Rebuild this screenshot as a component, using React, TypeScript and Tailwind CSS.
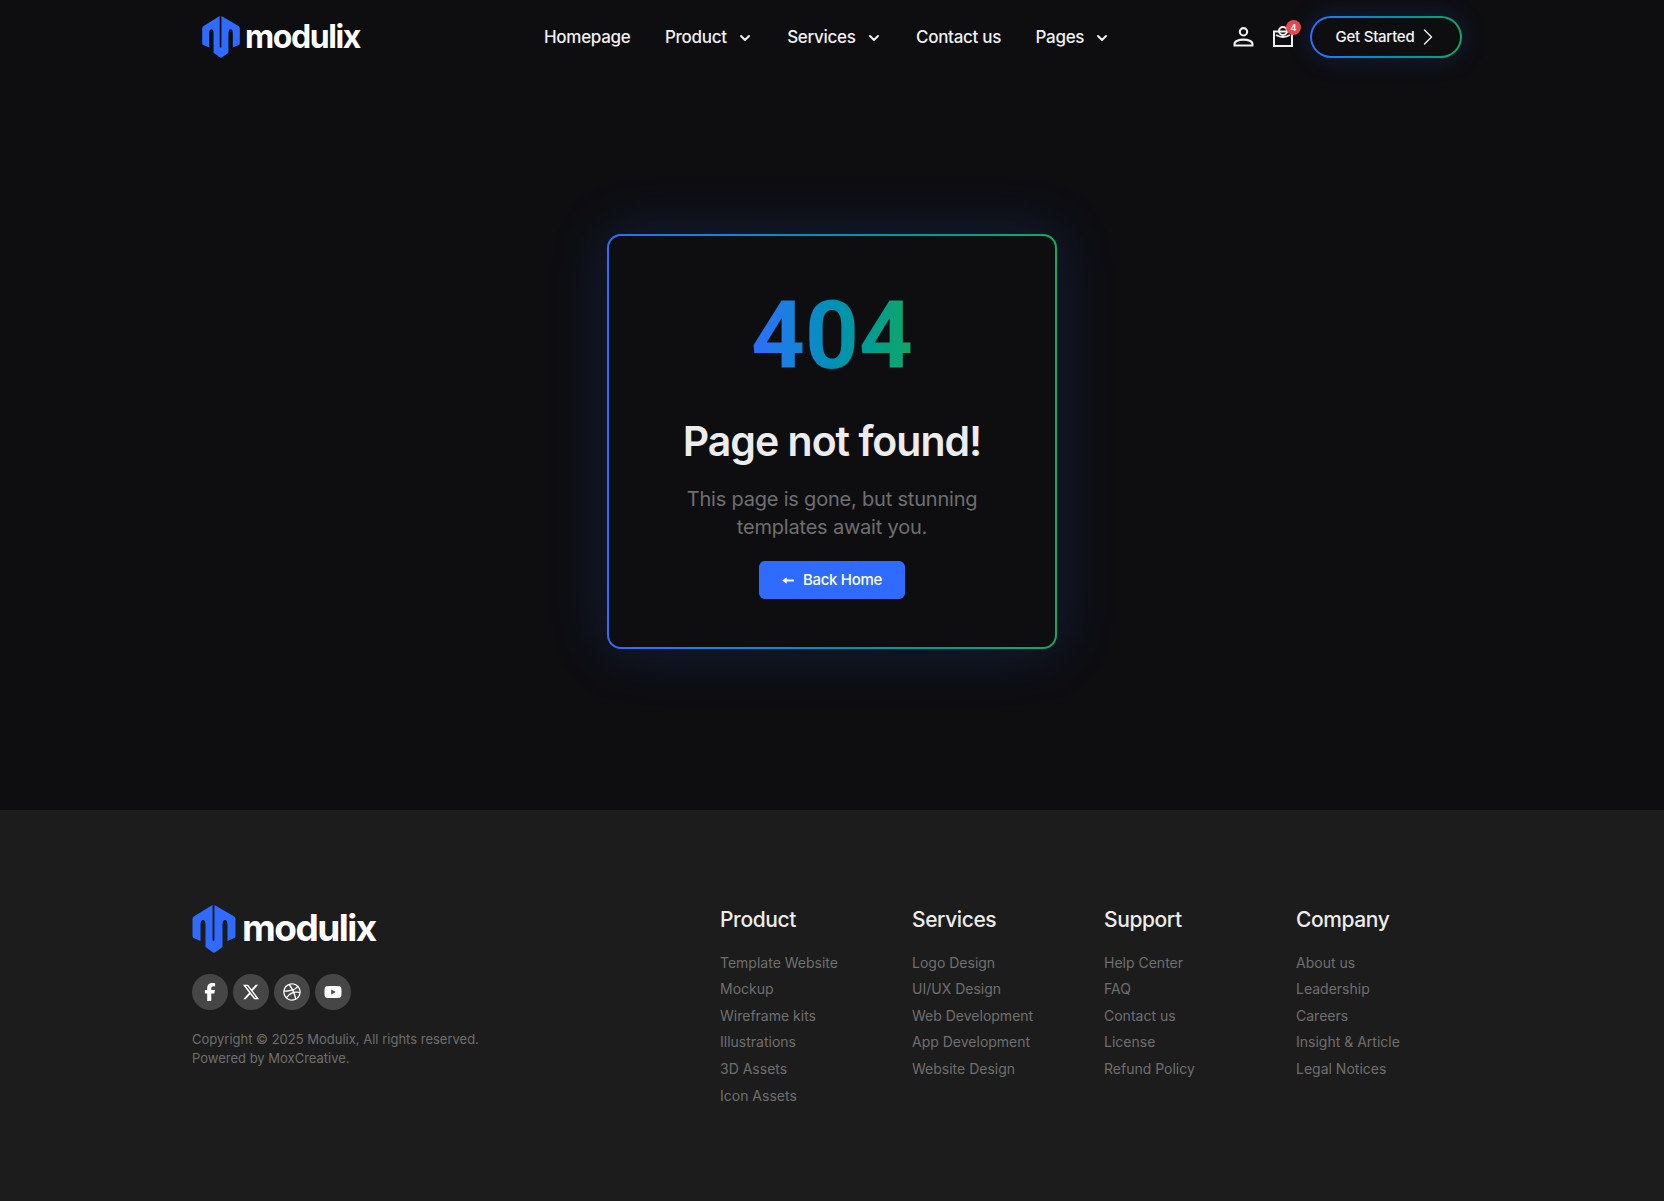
import React from 'react';
import { FaFacebookF, FaXTwitter, FaDribbble, FaYoutube } from 'react-icons/fa6';
import { ChevronDown, ChevronRight } from 'lucide-react';

const footerColumns = [
  { title: 'Product', links: ['Template Website', 'Mockup', 'Wireframe kits', 'Illustrations', '3D Assets', 'Icon Assets'] },
  { title: 'Services', links: ['Logo Design', 'UI/UX Design', 'Web Development', 'App Development', 'Website Design'] },
  { title: 'Support', links: ['Help Center', 'FAQ', 'Contact us', 'License', 'Refund Policy'] },
  { title: 'Company', links: ['About us', 'Leadership', 'Careers', 'Insight & Article', 'Legal Notices'] },
];

const LogoMark = ({ className }: { className: string }) => (
  <svg viewBox="5 5 43 48" className={className} fill="#2f6bff">
    <path d="M25 5 V40 Q26 42 27 40 V5 L46 16 Q48 17 48 19 V36 Q48 38 46 38.5 L40 41 V25 Q40 20 37.5 20 Q35 20 35 25 V47 L27.5 52.5 Q26.5 53 25.5 52.5 L18 47 V25 Q18 20 15.5 20 Q13 20 13 25 V41 L7 38.5 Q5 38 5 36 V19 Q5 17 7 16 Z" />
  </svg>
);

const NavLink = ({ label, caret }: { label: string; caret?: boolean }) => (
  <a className="flex items-center gap-[10px] text-[17px] font-medium text-[#f0f0f0] tracking-[-0.3px]">
    {label}
    {caret && <ChevronDown size={16} strokeWidth={3} />}
  </a>
);

const App: React.FC = () => {
  return (
    <div className="min-h-[1201px] bg-[#0e0e11] font-['Inter',sans-serif]">
      <header className="h-[74px] flex items-center pl-[202px] pr-[202px]">
        <div className="flex items-center gap-[5px] w-[342px]">
          <LogoMark className="w-[38px] h-[42px]" />
          <span className="text-[32px] font-bold text-white tracking-[-1.4px] leading-none">modulix</span>
        </div>
        <nav className="flex items-center gap-[34.5px] pt-[1px]">
          <NavLink label="Homepage" />
          <NavLink label="Product" caret />
          <NavLink label="Services" caret />
          <NavLink label="Contact us" />
          <NavLink label="Pages" caret />
        </nav>
        <div className="flex items-center ml-auto">
          <svg viewBox="0 0 20 20" className="w-[21px] h-[21px] mr-[19px] mb-[2px]" fill="none" stroke="#f0f0f0" strokeWidth="2">
            <circle cx="10" cy="5.5" r="3.5" />
            <path d="M1.5 18.5 v-1.5 c0-2.5 4-4 8.5-4 s8.5 1.5 8.5 4 v1.5 z" />
          </svg>
          <div className="relative mr-[17px] mb-[2px]">
            <svg viewBox="0 0 20 22" className="w-[20px] h-[22px]" fill="none" stroke="#f0f0f0" strokeWidth="2">
              <path d="M1 6.5 h18 v14.5 h-18 z" />
              <circle cx="10" cy="6" r="4" />
              <path d="M3 10 q7 4 14 0" />
            </svg>
            <span className="absolute -top-[5px] -right-[8px] w-[15px] h-[15px] rounded-full bg-[#e5484d] text-white text-[9px] font-semibold flex items-center justify-center">4</span>
          </div>
          <div className="rounded-full bg-linear-to-r from-[#2f6bff] to-[#16a660] p-[2px] shadow-[0_0_24px_rgba(37,85,200,0.25)]">
            <button className="h-[38px] w-[148px] rounded-full bg-[#0e0e11] flex items-center justify-center pl-[6px] text-[15px] font-medium text-[#f4f4f4] tracking-[-0.25px]">
              Get Started
              <ChevronRight size={28} strokeWidth={1.2} />
            </button>
          </div>
        </div>
      </header>

      <main className="h-[736px] flex justify-center pt-[160px]">
        <div className="w-[450px] h-[415px] rounded-[14px] bg-linear-to-r from-[#2f6bff] to-[#16a660] p-[2px] shadow-[0_0_60px_rgba(47,107,255,0.18)]">
          <div className="h-full rounded-[12px] bg-[#0e0e11] flex flex-col items-center pt-[50px]">
            <div className="text-[94px] leading-[100px] font-bold font-['Roboto',sans-serif] bg-linear-to-r from-[#2f6bff] to-[#16a660] bg-clip-text text-transparent">
              404
            </div>
            <h1 className="mt-[31px] text-[41px] leading-[48px] font-semibold text-[#ececec] tracking-[-1px]">Page not found!</h1>
            <p className="mt-[20px] w-[320px] text-center text-[20px] leading-[28px] text-[#6f6f6f] tracking-[-0.2px]">
              This page is gone, but stunning templates await you.
            </p>
            <button className="mt-[20px] w-[146px] h-[38px] rounded-[6px] bg-[#2f6bff] flex items-center justify-center gap-[8px] text-[15px] font-medium text-white tracking-[-0.3px]">
              <svg viewBox="0 0 14 10" className="w-[13px] h-[9px]" fill="#fff">
                <path d="M0 5 L5 1.5 V4 H13 V6 H5 V8.5 Z" />
              </svg>
              Back Home
            </button>
          </div>
        </div>
      </main>

      <footer className="h-[391px] bg-[#1c1c1c] flex pl-[192px] pt-[95px]">
        <div className="w-[528px]">
          <div className="flex items-center gap-[6px]">
            <LogoMark className="w-[44px] h-[48px]" />
            <span className="text-[37px] font-bold text-white tracking-[-1.5px] leading-none mb-[4px]">modulix</span>
          </div>
          <div className="flex gap-[5px] mt-[21px]">
            {[FaFacebookF, FaXTwitter, FaDribbble, FaYoutube].map((Icon, i) => (
              <a key={i} className="w-[36px] h-[36px] rounded-full bg-[#464646] flex items-center justify-center text-white">
                <Icon size={18} />
              </a>
            ))}
          </div>
          <p className="mt-[20px] text-[13px] leading-[19px] text-[#6f6f6f]">
            Copyright © 2025 Modulix, All rights reserved.
            <br />
            Powered by MoxCreative.
          </p>
        </div>
        <div className="flex pt-[1px]">
          {footerColumns.map((col) => (
            <div key={col.title} className="w-[192px]">
              <h3 className="text-[21px] leading-[28px] font-medium text-[#ececec] tracking-[-0.4px]">{col.title}</h3>
              <ul className="mt-[15.7px]">
                {col.links.map((link) => (
                  <li key={link} className="text-[14px] leading-[26.6px] text-[#6f6f6f]">{link}</li>
                ))}
              </ul>
            </div>
          ))}
        </div>
      </footer>
    </div>
  );
};

export default App;
